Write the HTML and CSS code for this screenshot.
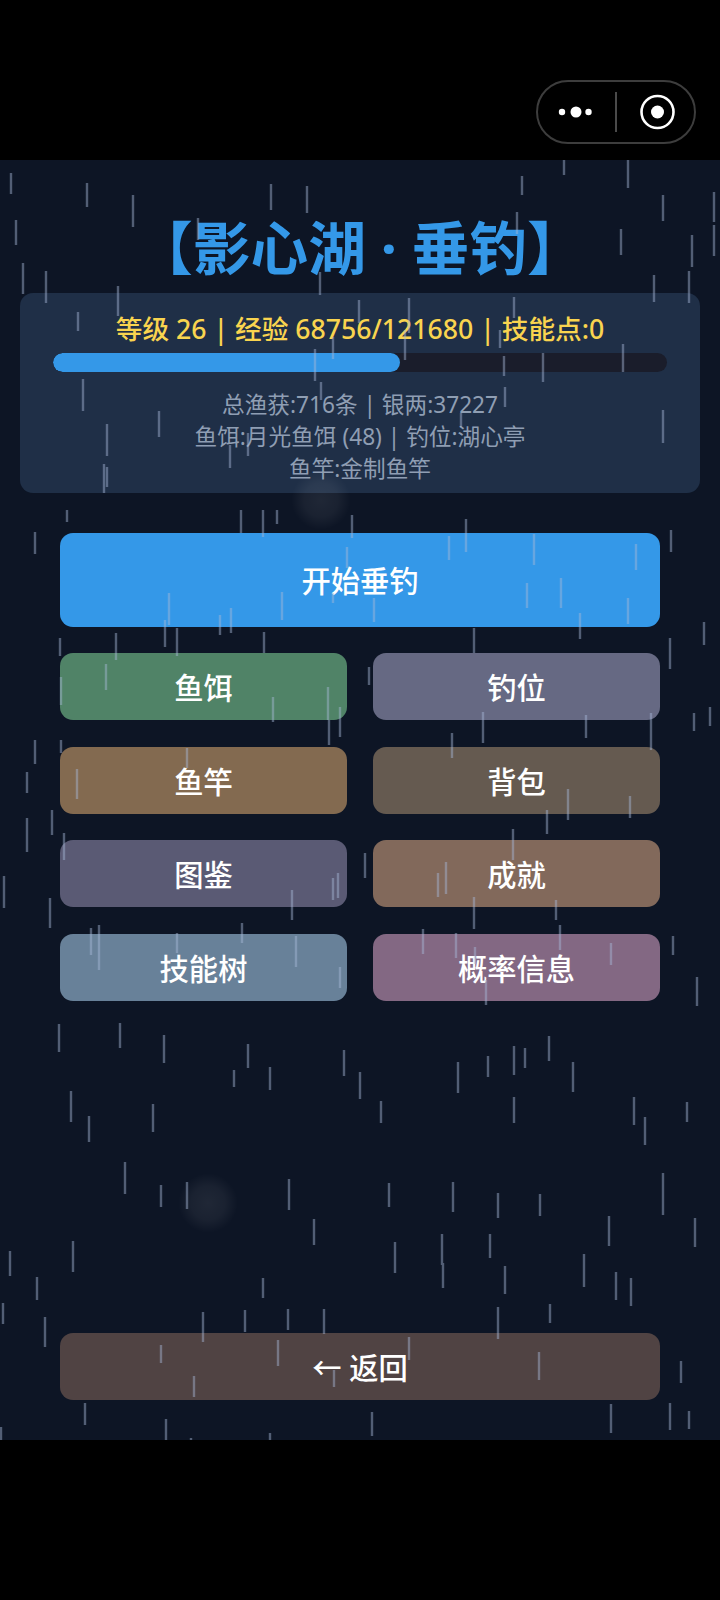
FILE: index.html
```html
<!DOCTYPE html>
<html lang="en">
<head>
    <meta charset="UTF-8">
    <title>影心湖</title>
    <link rel="stylesheet" href="styles.css">
</head>
<body>
<div class="topbar">
    <div class="capsule">
        <svg class="capsule-icon" width="77" height="60" viewBox="0 0 77 60">
            <circle cx="24" cy="30" r="3.2" fill="#fff"/>
            <circle cx="38" cy="30" r="5.5" fill="#fff"/>
            <circle cx="50.5" cy="30" r="3.2" fill="#fff"/>
        </svg>
        <span class="capsule-line"></span>
        <svg class="capsule-icon" width="77" height="60" viewBox="0 0 77 60">
            <circle cx="40.5" cy="30" r="16" fill="none" stroke="#fff" stroke-width="2.6"/>
            <circle cx="40.5" cy="30" r="6.5" fill="#fff"/>
        </svg>
    </div>
</div>

<div class="game">
    <h1 class="title">【影心湖 · 垂钓】</h1>

    <div class="panel">
        <div class="level">等级 26 | 经验 68756/121680 | 技能点:0</div>
        <div class="bar"><div class="bar-fill" style="width: 56.5%"></div></div>
        <div class="info">
            <div>总渔获:716条 | 银两:37227</div>
            <div>鱼饵:月光鱼饵 (48) | 钓位:湖心亭</div>
            <div>鱼竿:金制鱼竿</div>
        </div>
    </div>

    <div class="menu">
        <button class="btn btn-start">开始垂钓</button>
        <div class="btn-grid">
            <button class="btn btn-bait">鱼饵</button>
            <button class="btn btn-spot">钓位</button>
            <button class="btn btn-rod">鱼竿</button>
            <button class="btn btn-bag">背包</button>
            <button class="btn btn-book">图鉴</button>
            <button class="btn btn-achieve">成就</button>
            <button class="btn btn-skill">技能树</button>
            <button class="btn btn-rate">概率信息</button>
        </div>
    </div>

    <button class="btn btn-back">← 返回</button>

    <div class="glow glow-a"></div>
    <div class="glow glow-b"></div>
    <svg class="rain" width="720" height="1280" viewBox="0 160 720 1280">
        <path d="M11 173v21M87 183v24M133 195v32M16 220v25M23 263v31M46 271v32M118 286v30M78 312v19M83 379v32M159 411v26M107 424v32M104 464v29M107 467v20M230 445v23M248 433v23M271 184v26M307 186v27M198 218v22M320 272v23M315 349v32M321 382v18M333 337v22M359 300v23"/>
        <path d="M564 160v15M628 160v28M522 176v19M517 212v22M663 195v26M714 192v30M714 225v31M621 229v26M692 235v32M654 275v27M689 271v32M409 298v35M405 330v30M514 297v21M500 330v18M504 356v20M543 353v29M623 344v28M505 387v20M461 413v14M663 410v33"/>
        <path d="M67 510v12M241 510v23M263 510v27M277 510v14M352 515v23M35 532v22M169 593v32M282 592v28M347 547v21M333 593v10M165 620v27M177 628v28M220 615v20M231 608v25M116 633v27M264 632v21M60 638v18M106 664v26M61 677v28M273 697v25M328 687v33M329 720v25M340 707v30M35 740v24M61 740v13M27 772v21M187 748v20M77 769v30"/>
        <path d="M466 519v33M449 536v24M534 534v31M636 544v26M671 530v22M527 583v25M561 578v30M628 598v26M374 598v24"/>
        <path d="M474 628v25M580 613v26M704 622v23M670 638v31M369 667v18M483 712v31M586 715v23M651 713v37M694 713v18M710 707v19M452 733v25M568 789v31M630 796v22M547 810v24M513 829v31M365 853v25M446 862v32M438 873v24M474 897v32M556 900v20M560 925v25M423 929v25M456 933v25M611 943v22M673 936v19M697 977v29M486 980v25M475 947v17"/>
        <path d="M27 818v34M52 810v25M64 833v27M4 876v32M50 898v30M91 928v27M99 925v45M177 933v20M242 923v20M296 936v31M340 967v21M292 890v30M333 878v22M338 873v25M59 1024v28M120 1023v25M164 1035v28M248 1044v24M344 1050v26M234 1070v17M270 1067v23M360 1072v27"/>
        <path d="M71 1091v31M89 1116v26M153 1104v28M125 1162v32M161 1185v22M187 1182v27M289 1179v31M314 1219v26M10 1251v25M73 1241v31M37 1277v23M263 1278v20"/>
        <path d="M381 1101v22M458 1062v31M488 1056v21M514 1046v29M525 1048v20M549 1036v25M573 1062v30M514 1097v26M634 1097v28M645 1117v28M687 1102v20M389 1183v24M453 1182v30M498 1193v25M540 1194v22M663 1173v42M609 1216v30M695 1218v29M395 1242v31M442 1234v31M443 1263v25M490 1234v24M505 1266v28M584 1254v33M616 1272v28M631 1278v28"/>
        <path d="M3 1303v21M45 1317v30M203 1312v30M245 1310v22M288 1309v21M324 1309v25M498 1307v32M550 1304v19M161 1345v18M278 1340v26M409 1337v23M539 1352v28M194 1376v21M334 1370v17M681 1361v22M85 1403v22M166 1419v21M372 1412v24M611 1404v29M670 1403v27M689 1411v18M1 1427v13M270 1433v7M191 1438v2"/>
    </svg>
</div>
</body>
</html>
```

FILE: styles.css
```css
body {
    margin: 0;
    background: #000;
    font-family: "Noto Sans", "Noto Sans CJK SC", sans-serif;
    height: 1600px;
}

/* top black strip with the capsule */
.topbar {
    height: 160px;
    display: flex;
    justify-content: flex-end;
    align-items: flex-start;
    padding-right: 24px;
    box-sizing: border-box;
    padding-top: 80px;
}

.capsule {
    width: 160px;
    height: 64px;
    box-sizing: border-box;
    border: 2px solid #3d3d3d;
    border-radius: 32px;
    display: flex;
    align-items: center;
}

.capsule-icon {
    flex: none;
}

.capsule-line {
    width: 1.5px;
    height: 40px;
    background: #4a4a4a;
    flex: none;
}

.game {
    position: relative;
    height: 1280px;
    background: #0d1525;
    overflow: hidden;
    display: flex;
    flex-direction: column;
    align-items: center;
    color: #fff;
}

.title {
    margin: 50px 0 0;
    height: 83px;
    font-size: 57.6px;
    line-height: 75px;
    font-weight: 700;
    color: #3498e8;
    white-space: nowrap;
}

.panel {
    width: 680px;
    height: 200px;
    box-sizing: border-box;
    padding: 18px 33px 0;
    background: #1f2f47;
    border-radius: 13px;
    text-align: center;
}

.level {
    font-size: 26.67px;
    line-height: 36px;
    font-weight: 500;
    color: #f9d44f;
    white-space: nowrap;
}

.bar {
    margin-top: 6px;
    height: 19px;
    border-radius: 10px;
    background: #1a1d2b;
    overflow: hidden;
}

.bar-fill {
    height: 100%;
    border-radius: 10px;
    background: #3498e8;
}

.info {
    margin-top: 17px;
    font-size: 22.67px;
    line-height: 32px;
    color: #8f9eb3;
}

.menu {
    margin-top: 40px;
    width: 600px;
}

.btn {
    display: block;
    width: 100%;
    border: none;
    border-radius: 13px;
    padding: 0;
    color: #fff;
    font-family: inherit;
    font-size: 29.3px;
    font-weight: 500;
    height: 67px;
}

.btn-start {
    height: 93.5px;
    background: #3498e8;
}

.btn-grid {
    margin-top: 26.5px;
    display: grid;
    grid-template-columns: 287px 287px;
    column-gap: 26px;
    row-gap: 26.5px;
}

.btn-bait { background: #508367; }
.btn-spot { background: #666983; }
.btn-rod { background: #836a50; }
.btn-bag { background: #655a50; }
.btn-book { background: #5a5a74; }
.btn-achieve { background: #82695b; }
.btn-skill { background: #688199; }
.btn-rate { background: #836883; }

.btn-back {
    margin-top: 332.5px;
    width: 600px;
    background: #504343;
}

/* things lying over the page */
.glow {
    position: absolute;
    width: 60px;
    height: 60px;
    border-radius: 50%;
    background: radial-gradient(circle, rgba(255, 255, 255, 0.08), rgba(255, 255, 255, 0.055) 40%, rgba(255, 255, 255, 0) 70%);
}

.glow-a { left: 291px; top: 310px; }
.glow-b { left: 178px; top: 1013px; }

.rain {
    position: absolute;
    left: 0;
    top: 0;
    pointer-events: none;
    filter: blur(0.4px);
}

.rain path {
    stroke: #a7b7d6;
    stroke-opacity: 0.45;
    stroke-width: 2.4;
    fill: none;
}
```
